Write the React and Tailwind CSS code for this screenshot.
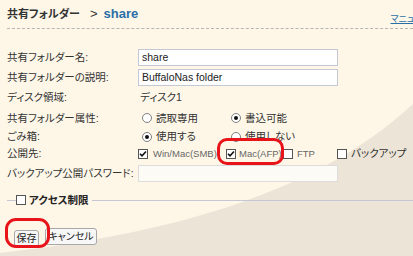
import React from "react";

const jp = "font-['Liberation_Sans','Noto_Sans_CJK_JP',sans-serif] [font-feature-settings:'palt']";

function Radio({ checked }) {
  return (
    <span className="inline-flex w-[10px] h-[10px] rounded-full border border-[#808080] bg-white items-center justify-center shrink-0">
      {checked && <span className="w-[4px] h-[4px] rounded-full bg-[#111]" />}
    </span>
  );
}

function Check({ checked }) {
  return (
    <span className="inline-flex w-[10px] h-[10px] border border-[#555] bg-white items-center justify-center shrink-0">
      {checked && (
        <svg width="8" height="8" viewBox="0 0 8 8">
          <path d="M1 3.8 L3 5.8 L7 1.5" fill="none" stroke="#111" strokeWidth="1.6" />
        </svg>
      )}
    </span>
  );
}

function Row({ label, h, children }) {
  return (
    <div className={`flex items-center ${h}`}>
      <div className="w-[131px] shrink-0 text-[10.5px] leading-none text-[#333] whitespace-nowrap">{label}</div>
      <div className="flex items-center text-[10.5px] leading-none text-[#333] whitespace-nowrap">{children}</div>
    </div>
  );
}

function TextInput({ value, disabled }) {
  return (
    <div
      className={`w-[200px] h-[17px] border flex items-center px-[3px] text-[10.5px] font-['Liberation_Sans',sans-serif] ${
        disabled ? "border-[#dcdcdc] bg-[#fdfbf6]" : "border-[#c3c7d6] bg-white text-[#222]"
      }`}
    >
      {value}
    </div>
  );
}

export default function App() {
  return (
    <div className={`relative w-[413px] h-[256px] overflow-hidden bg-[#fef7e8] ${jp}`}>
      {/* background swoosh */}
      <svg className="absolute inset-0" width="413" height="256" viewBox="0 0 413 256">
        <path d="M0 253 C 150 236 310 200 413 104 L413 256 L0 256 Z" fill="#ece4d6" />
      </svg>

      <div className="relative">
        {/* Header */}
        <div className="flex items-end justify-between ml-[7px] h-[29px] border-b border-dashed border-[#b5b5b5]">
          <div className="flex items-baseline text-[11px] font-bold text-[#333] pb-[8px] leading-none whitespace-nowrap">
            <span>共有フォルダー</span>
            <span className="ml-[10px] mr-[6px] font-normal text-[13px] font-['Liberation_Sans',sans-serif]">&gt;</span>
            <span className="text-[13px] text-[#2a6fa8] font-['Liberation_Sans',sans-serif]">share</span>
          </div>
          <span className="text-[9px] text-[#2a6fa8] underline pb-[4px] -mr-[18px] whitespace-nowrap leading-none">マニュアル</span>
        </div>

        {/* Form */}
        <div className="pl-[7px] mt-[18px]">
          <Row label="共有フォルダー名:" h="h-[20px]">
            <TextInput value="share" />
          </Row>
          <Row label="共有フォルダーの説明:" h="h-[20px]">
            <TextInput value="BuffaloNas folder" />
          </Row>
          <Row label="ディスク領域:" h="h-[21px]">
            <span className="ml-[2px]">ディスク1</span>
          </Row>
          <Row label="共有フォルダー属性:" h="h-[20px]">
            <div className="flex items-center w-[89px] ml-[4px] gap-[4px]">
              <Radio />
              <span>読取専用</span>
            </div>
            <div className="flex items-center gap-[4px]">
              <Radio checked />
              <span>書込可能</span>
            </div>
          </Row>
          <Row label="ごみ箱:" h="h-[17px]">
            <div className="flex items-center w-[89px] ml-[4px] gap-[4px]">
              <Radio checked />
              <span>使用する</span>
            </div>
            <div className="flex items-center gap-[4px]">
              <Radio />
              <span>使用しない</span>
            </div>
          </Row>
          <Row label="公開先:" h="h-[17px]">
            <div className="flex items-center text-[9.5px] text-[#666] font-['Liberation_Sans',sans-serif]">
              <div className="flex items-center gap-[5px] w-[88px] overflow-hidden">
                <Check checked />
                <span>Win/Mac(SMB)</span>
              </div>
              <div className="relative flex items-center gap-[3px] w-[57px]">
                <Check checked />
                <span>Mac(AFP)</span>
                <span className="absolute left-[-9px] top-[-11px] w-[67px] h-[27px] rounded-[10px] border-[3px] border-[#e8141a]" />
              </div>
              <div className="flex items-center gap-[4px] w-[54px]">
                <Check />
                <span>FTP</span>
              </div>
              <div className={`flex items-center gap-[4px] text-[10.5px] text-[#333] ${jp}`}>
                <Check />
                <span>バックアップ</span>
              </div>
            </div>
          </Row>
          <Row label="バックアップ公開パスワード:" h="h-[23px]">
            <TextInput value="" disabled />
          </Row>
        </div>

        {/* Access restriction fieldset legend */}
        <div className="flex items-center mt-[10px] pl-[7px]">
          <div className="w-[9px] border-t border-[#c5c6d6]" />
          <Check />
          <span className="ml-[3px] mr-[3px] text-[10.5px] leading-none font-bold text-[#222]">アクセス制限</span>
          <div className="flex-1 border-t border-[#c5c6d6]" />
        </div>

        {/* Buttons */}
        <div className="flex items-center gap-[6px] pl-[14px] mt-[19px]">
          <div className="relative">
            <button className="h-[17px] w-[25px] text-[10px] text-[#222] bg-[#f7f7f7] border border-[#a8a8a8] rounded-[3px] leading-none">
              保存
            </button>
            <span className="absolute left-[-9px] top-[-7px] w-[45px] h-[30px] rounded-[11px] border-[3px] border-[#e8141a]" />
          </div>
          <button className="h-[17px] w-[52px] text-[10px] text-[#222] bg-[#f7f7f7] border border-[#a8a8a8] rounded-[3px] leading-none">
            キャンセル
          </button>
        </div>
      </div>
    </div>
  );
}
